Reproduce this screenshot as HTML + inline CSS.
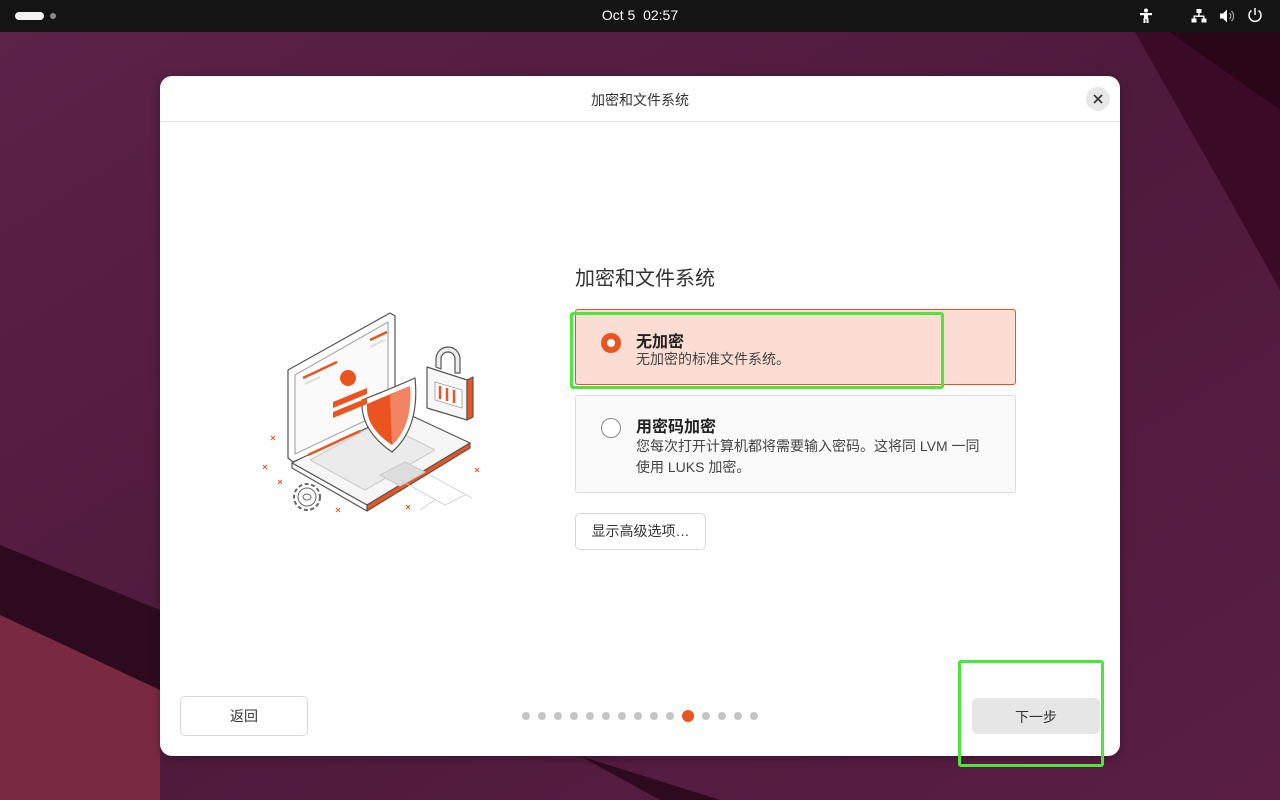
<!DOCTYPE html>
<html><head><meta charset="utf-8">
<style>
*{margin:0;padding:0;box-sizing:border-box}
body{width:1280px;height:800px;overflow:hidden;position:relative;font-family:"Liberation Sans","Noto Sans CJK SC",sans-serif;color:#333;background:#5a1d45}
.bg{position:absolute;inset:0}
.top{position:absolute;left:0;top:0;width:1280px;height:32px;background:#141414;color:#fff;font-size:14px}
.dlg{position:absolute;left:160px;top:76px;width:960px;height:680px;background:#fff;border-radius:12px;box-shadow:0 2px 10px rgba(0,0,0,.3)}
.hdr{height:46px;border-bottom:1px solid #e4e4e4;text-align:center;line-height:48px;font-size:14px;color:#333}
.close{position:absolute;left:926px;top:11px;width:24px;height:24px;border-radius:50%;background:#e8e8e8}
.a{position:absolute}
.opt{position:absolute;left:415px;width:441px;border-radius:3px}
.radio{position:absolute;left:25px;width:20px;height:20px;border-radius:50%}
.t{position:absolute;left:60px;font-size:16px;font-weight:bold;color:#222}
.s{position:absolute;left:60px;font-size:14px;color:#444;line-height:21px}
.btn{position:absolute;border:1px solid #d8d8d8;border-radius:5px;background:#fff;font-size:14px;text-align:center;color:#333}
.dot{position:absolute;top:636px;width:8px;height:8px;border-radius:50%;background:#c4c4c4}
.green{position:absolute;border:3px solid #4de63a;border-radius:3px}
</style></head><body>
<svg class="bg" width="1280" height="800">
<defs><linearGradient id="g" x1="0" y1="0" x2="1" y2="1"><stop offset="0" stop-color="#5e2249"/><stop offset=".5" stop-color="#4e1a3c"/><stop offset="1" stop-color="#5a1e44"/></linearGradient></defs>
<rect width="1280" height="800" fill="url(#g)"/>
<polygon points="1135,32 1280,32 1280,290 1230,200" fill="#3a0a26"/>
<polygon points="1170,32 1280,32 1280,110" fill="#2a0619"/>
<polygon points="0,545 160,610 160,690 0,620" fill="#2e0a1e"/>
<polygon points="0,615 160,690 160,800 0,800" fill="#7a2a40"/>
<polygon points="580,756 720,800 660,800" fill="#2e0a1e"/>
</svg>
<div class="top">
<div class="a" style="left:15px;top:12px;width:29px;height:8px;border-radius:4px;background:#f2f2f2"></div>
<div class="a" style="left:50px;top:13px;width:6px;height:6px;border-radius:50%;background:#888"></div>
<div class="a" style="left:0;width:1280px;top:7px;text-align:center">Oct 5&nbsp;&nbsp;02:57</div>
<svg class="a" style="left:1138px;top:8px" width="16" height="16" fill="#fff"><circle cx="8" cy="2.5" r="2"/><rect x="2" y="5" width="12" height="2.2"/><rect x="6" y="6" width="4" height="5"/><rect x="5.5" y="10" width="2" height="5"/><rect x="8.5" y="10" width="2" height="5"/></svg>
<svg class="a" style="left:1191px;top:8px" width="16" height="16" fill="#fff"><rect x="5.5" y="1" width="5" height="4"/><rect x="7.3" y="5" width="1.4" height="3"/><rect x="2.5" y="7.5" width="11" height="1.4"/><rect x="2.5" y="7.5" width="1.4" height="3"/><rect x="12.1" y="7.5" width="1.4" height="3"/><rect x="0.5" y="10.5" width="5" height="4"/><rect x="10.5" y="10.5" width="5" height="4"/></svg>
<svg class="a" style="left:1219px;top:8px" width="18" height="16"><path d="M1 5.5h3l4-4v13l-4-4H1z" fill="#fff"/><path d="M10.5 5a4 4 0 0 1 0 6M12.5 3a7 7 0 0 1 0 10" stroke="#999" stroke-width="1.3" fill="none"/></svg>
<svg class="a" style="left:1247px;top:7px" width="16" height="16" fill="none" stroke="#fff" stroke-width="1.5"><path d="M8 1v7"/><path d="M4.5 3.5a6 6 0 1 0 7 0"/></svg>
</div>
<div class="dlg">
<div class="hdr">加密和文件系统</div>
<div class="close"><svg width="24" height="24" stroke="#333" stroke-width="1.6"><path d="M8 8l8 8M16 8l-8 8"/></svg></div>
<svg class="a" style="left:80px;top:224px" width="260" height="230">
<g stroke="#555" stroke-width="1.2" stroke-linejoin="round">
<path d="M52 163 L127 205 L230 143 L155 108 Z" fill="#f6f6f6"/>
<path d="M127 205 L230 143 L230 148 L127 211 Z" fill="#e95420"/>
<path d="M52 163 L52 168 L127 211 L127 205 Z" fill="#fff"/>
<path d="M70 160 L125 190 L195 150 L140 122 Z" fill="#ebebeb" stroke="#ccc"/>
<path d="M140 175 L160 186 L185 172 L165 162 Z" fill="#ddd" stroke="#ccc"/>
<path d="M48 70 L150 13 L155 16 L155 115 L53 162 L48 158 Z" fill="#fff"/>
<path d="M55 75 L148 22 L148 110 L55 154 Z" fill="#fbfbfb" stroke="#aaa"/>
<path d="M196 67 v-8 a12 12 0 0 1 24 0 v14 h-5 v-14 a7 7 0 0 0 -14 0 v10 z" fill="#eee"/>
<path d="M187 67 L227 80 L227 120 L187 108 Z" fill="#f7f7f7"/>
<path d="M227 80 L233 77 L233 117 L227 120 Z" fill="#e95420"/>
<path d="M122 100 Q148 90 175 78 Q180 128 152 152 Q120 130 122 100 Z" fill="#fff"/>
</g>
<path d="M127 104 Q148 95 170 86 Q173 125 152 145 Q125 127 127 104 Z" fill="#e95420"/>
<path d="M150 95 L170 86 Q173 125 152 145 Z" fill="#f28363"/>
<path d="M195 82 L222 90 L222 108 L195 100 Z" fill="#fff" stroke="#999" stroke-width=".8"/>
<path d="M200 86v13M207 88v13M214 90v13" stroke="#e95420" stroke-width="2.5"/>
<path d="M63 78 L97 62 M130 40 L147 32 M68 155 L120 131" stroke="#e95420" stroke-width="2.5"/>
<path d="M65 84 L80 77 M130 47 L145 40" stroke="#ddd" stroke-width="2"/>
<circle cx="108" cy="78" r="8" fill="#e95420"/>
<path d="M93 102 L127 88 L127 94 L93 108 Z M93 112 L127 98 L127 104 L93 118 Z" fill="#e95420"/>
<path d="M160 180 L205 205 L225 195 M190 175 L232 198 M195 200 L180 210" stroke="#ccc" stroke-width=".8" fill="none"/>
<g stroke="#e95420" stroke-width="1"><path d="M31 136l4 4m0-4l-4 4M23 165l4 4m0-4l-4 4M38 180l4 4m0-4l-4 4M96 208l4 4m0-4l-4 4M166 205l4 4m0-4l-4 4M235 168l4 4m0-4l-4 4"/></g>
<circle cx="67" cy="197" r="13" fill="#fff" stroke="#666" stroke-width="2" stroke-dasharray="4 2.5"/>
<circle cx="67" cy="197" r="9" fill="#fff" stroke="#666" stroke-width="1"/>
<ellipse cx="67" cy="197" rx="4" ry="3" fill="none" stroke="#666"/>
</svg>
<div class="a" style="left:415px;top:186px;font-size:20px;color:#333">加密和文件系统</div>
<div class="opt" style="top:233px;height:76px;background:#fbddd3;border:1px solid #e95420">
<div class="radio" style="top:23px;background:#e95420"><div style="position:absolute;left:6px;top:6px;width:8px;height:8px;border-radius:50%;background:#fff"></div></div>
<div class="t" style="top:18px">无加密</div>
<div class="s" style="top:39px">无加密的标准文件系统。</div>
</div>
<div class="opt" style="top:319px;height:98px;background:#fafafa;border:1px solid #ddd">
<div class="radio" style="top:22px;border:1px solid #888;background:#fff"></div>
<div class="t" style="top:17px">用密码加密</div>
<div class="s" style="top:40px">您每次打开计算机都将需要输入密码。这将同 LVM 一同<br>使用 LUKS 加密。</div>
</div>
<div class="btn" style="left:415px;top:437px;width:131px;height:37px;line-height:35px">显示高级选项…</div>
<div class="btn" style="left:20px;top:620px;width:128px;height:40px;line-height:38px">返回</div>
<div class="btn" style="left:812px;top:622px;width:128px;height:36px;line-height:36px;background:#e6e6e6;border-color:#e6e6e6">下一步</div>
<div class="dot" style="left:362px"></div><div class="dot" style="left:378px"></div><div class="dot" style="left:394px"></div><div class="dot" style="left:410px"></div><div class="dot" style="left:426px"></div><div class="dot" style="left:442px"></div><div class="dot" style="left:458px"></div><div class="dot" style="left:474px"></div><div class="dot" style="left:490px"></div><div class="dot" style="left:506px"></div>
<div class="dot" style="left:522px;top:634px;width:12px;height:12px;background:#e95420"></div>
<div class="dot" style="left:542px"></div><div class="dot" style="left:558px"></div><div class="dot" style="left:574px"></div><div class="dot" style="left:590px"></div>
</div>
<div class="green" style="left:570px;top:312px;width:374px;height:77px"></div>
<div class="green" style="left:958px;top:660px;width:146px;height:107px"></div>
</body></html>
